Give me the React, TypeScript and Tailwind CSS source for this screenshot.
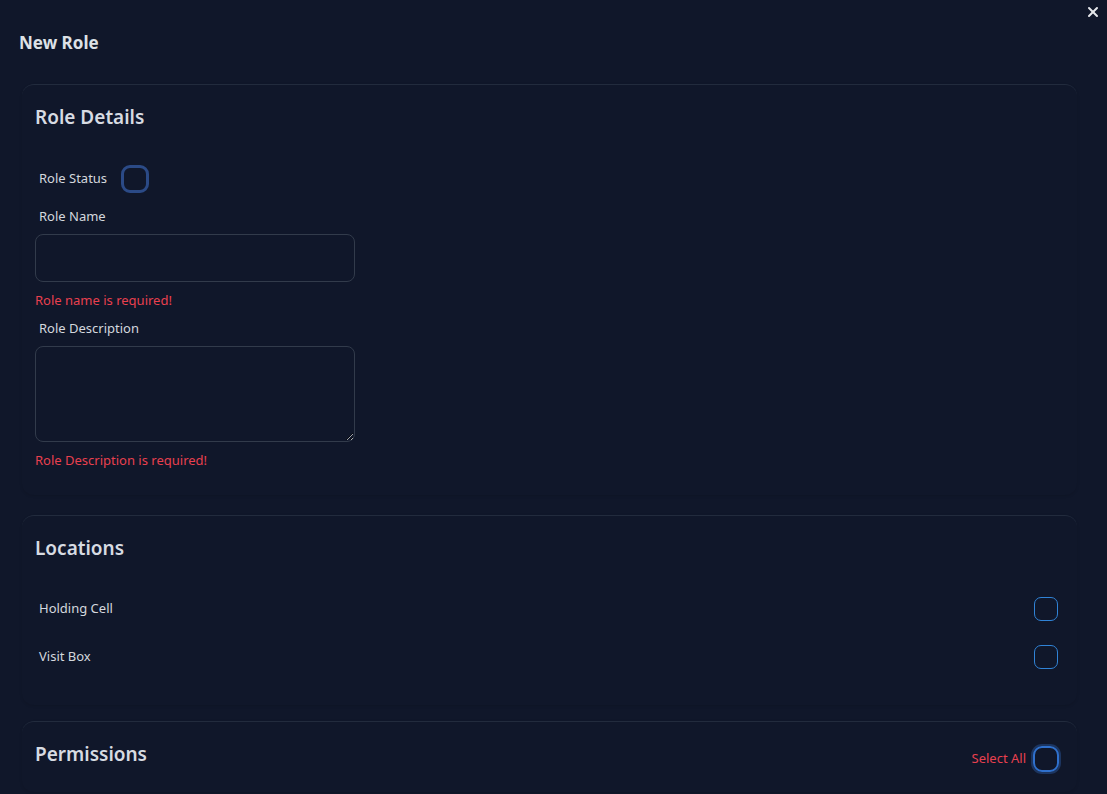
import { X } from 'lucide-react';

const font = { fontFamily: '"Noto Sans", "Open Sans", sans-serif' };

function Card({ children, className = '' }: { children: React.ReactNode; className?: string }) {
  return (
    <section
      className={`ml-[22px] mr-[30px] rounded-xl border-t border-[#222b3d] shadow-[0_1px_3px_rgba(0,0,0,0.12)] px-[13px] ${className}`}
    >
      {children}
    </section>
  );
}

function Box({ big = false }: { big?: boolean }) {
  if (big) {
    return (
      <span className="block w-[26px] h-[26px] rounded-[9px] border-[2px] border-[#2f70cc] ring-[2px] ring-[#1c3560]" />
    );
  }
  return <span className="block w-6 h-6 rounded-[7px] border-[1.5px] border-[#3083d6]" />;
}

export default function App() {
  return (
    <div className="min-h-screen bg-[#10172a] text-[#d4d8de] relative" style={font}>
      <button className="absolute right-[6px] top-[4px] text-[#e5e7eb]">
        <X size={16} strokeWidth={3} />
      </button>

      <h1 className="pl-[19px] pt-[31px] text-[17px] font-bold text-[#dde1e6] leading-6">New Role</h1>

      <Card className="mt-[29px] pt-[20px] pb-[25px]">
        <h2 className="text-[19px] font-semibold text-[#d7dbe2] leading-6">Role Details</h2>

        <div className="mt-[36px] flex items-center gap-[14px] pl-1">
          <span className="text-[13px]">Role Status</span>
          <span className="block w-7 h-7 rounded-[9px] border-[3px] border-[#2b4a86]" />
        </div>

        <label className="block mt-[13px] pl-1 text-[13px] leading-5">Role Name</label>
        <input className="mt-[8px] block w-[320px] h-[48px] rounded-lg border border-[#323b4b] bg-transparent outline-none" />
        <p className="mt-[8px] text-[13px] leading-5 text-[#e8404f]">Role name is required!</p>

        <label className="block mt-[8px] pl-1 text-[13px] leading-5">Role Description</label>
        <textarea className="mt-[8px] block w-[320px] h-[96px] rounded-lg border border-[#323b4b] bg-transparent outline-none" />
        <p className="mt-[8px] text-[13px] leading-5 text-[#e8404f]">Role Description is required!</p>
      </Card>

      <Card className="mt-[20px] pt-[20px] pb-[36px]">
        <h2 className="text-[19px] font-semibold text-[#d7dbe2] leading-6">Locations</h2>
        <div className="mt-[37px] flex flex-col gap-[24px]">
          {['Holding Cell', 'Visit Box'].map((n) => (
            <div key={n} className="flex items-center justify-between pl-1 pr-[6px] h-6">
              <span className="text-[13px]">{n}</span>
              <Box />
            </div>
          ))}
        </div>
      </Card>

      <Card className="mt-[16px] pt-[20px] pb-[20px]">
        <div className="flex items-start justify-between pr-[5px]">
          <h2 className="text-[19px] font-semibold text-[#d7dbe2] leading-6">Permissions</h2>
          <div className="flex items-center gap-[7px] mt-[4px]">
            <span className="text-[13px] text-[#e8404f]">Select All</span>
            <Box big />
          </div>
        </div>
      </Card>
    </div>
  );
}
